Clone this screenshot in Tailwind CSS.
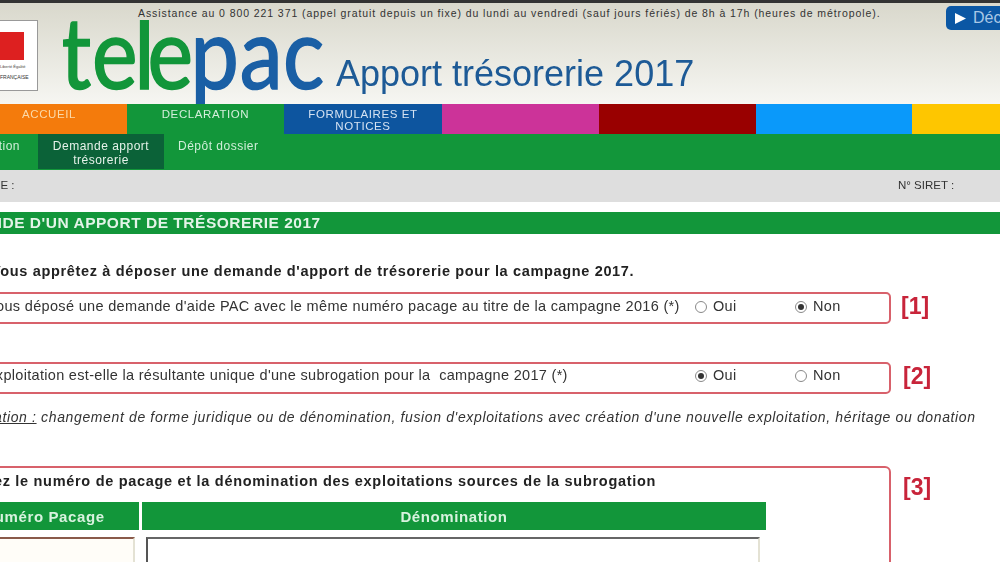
<!DOCTYPE html>
<html lang="fr">
<head>
<meta charset="utf-8">
<title>telepac - Apport trésorerie 2017</title>
<script src="https://cdn.jsdelivr.net/npm/@tailwindcss/browser@4"></script>
</head>
<body class="bg-white">
<div class="w-[1000px] h-[562px] overflow-hidden font-['Liberation_Sans',Arial,sans-serif] text-[#222] blur-[0.45px]">
<div class="w-[1100px] -ml-[29px]">
  <header class="h-[104px] border-t-[3px] border-[#333] bg-gradient-to-b from-[#d9d8cc] to-[#f6f6f2]">
    <div class="h-[17px] flex items-start">
      <p class="ml-[167px] mt-[4px] w-[760px] text-[10.5px] leading-[12px] tracking-[0.915px] whitespace-nowrap text-[#333]">Assistance au 0 800 221 371 (appel gratuit depuis un fixe) du lundi au vendredi (sauf jours fériés) de 8h à 17h (heures de métropole).</p>
      <div class="ml-[48px] mt-[3px] w-[100px] h-[24px] rounded-[5px] bg-[#0b57a4] flex items-center pl-[9px] gap-[7px] text-[16px] relative z-10">
        <svg class="shrink-0" width="11" height="11" viewBox="0 0 11 11"><path d="M0 0 L11 5.5 L0 11 Z" fill="#fff"/></svg>
        <span class="text-[#a9c8e6] whitespace-nowrap">Déconnexion</span>
      </div>
    </div>
    <div class="flex items-start">
      <div class="w-[67px] h-[71px] border border-[#999] bg-white flex flex-col items-start pl-[5px] pt-[11px]">
        <div class="w-[47px] h-[28px] flex">
          <div class="w-[17px] bg-[#2a4f9c]"></div>
          <div class="w-[6px] bg-white"></div>
          <div class="w-[24px] bg-[#dd2020]"></div>
        </div>
        <p class="ml-[23px] mt-[4px] text-[4px] leading-[5px] text-[#444] whitespace-nowrap">Liberté Égalité</p>
        <p class="ml-[23px] mt-[5px] text-[5px] leading-[6px] text-[#333] whitespace-nowrap">FRANÇAISE</p>
      </div>
      <svg class="ml-[25px] shrink-0" width="262" height="84" viewBox="0 0 262 84">
        <g transform="scale(0.88 1)">
          <text x="-3 33 81 96" y="69" font-family="Lato, sans-serif" font-size="98" fill="#12963a" stroke="#12963a" stroke-width="1.6">tele</text>
          <text x="145 201 250" y="69" font-family="Lato, sans-serif" font-size="98" fill="#1a5fa5" stroke="#1a5fa5" stroke-width="1.6">pac</text>
        </g>
      </svg>
      <h1 class="ml-[11px] mt-[34px] text-[36px] leading-[40px] text-[#1d5a96] whitespace-nowrap">Apport trésorerie 2017</h1>
    </div>
  </header>

  <nav class="flex h-[30px] text-[11.5px] leading-[12px] tracking-[0.6px] text-center">
    <a class="w-[156px] bg-[#f47b0c] text-[#fbd9a8] pt-[4px]">ACCUEIL</a>
    <a class="w-[157px] bg-[#12963a] text-[#d4eedb] pt-[4px]">DECLARATION</a>
    <a class="w-[158px] bg-[#0d559f] text-[#d4e2f2] pt-[4px]">FORMULAIRES ET<br>NOTICES</a>
    <a class="w-[157px] bg-[#cc3399]"></a>
    <a class="w-[157px] bg-[#990000]"></a>
    <a class="w-[156px] bg-[#0a99fa]"></a>
    <a class="w-[159px] bg-[#fec600]"></a>
  </nav>

  <div class="flex h-[36px] bg-[#12963a] text-[12px] leading-[14px] tracking-[0.5px] text-[#cfeed8] text-center">
    <a class="w-[67px] shrink-0 flex justify-end pt-[5px] pr-[18px] whitespace-nowrap">Information</a>
    <a class="w-[126px] h-[35px] bg-[#0b6238] text-[#e6f2ea] pt-[5px]">Demande apport<br>trésorerie</a>
    <a class="pl-[14px] pt-[5px] whitespace-nowrap">Dépôt dossier</a>
  </div>

  <div class="h-[32px] bg-[#dedede] flex items-center text-[11.5px] text-[#333]">
    <span class="w-[927px] -ml-[26px] shrink-0 text-left">N° PACAGE :</span>
    <span class="ml-[26px]">N° SIRET :</span>
  </div>

  <h2 class="mt-[10px] h-[22px] bg-[#12963a] text-[#e3f4e8] text-[15.5px] leading-[22px] font-bold tracking-[0.52px] whitespace-nowrap"><span class="inline-block -ml-[28px]">DEMANDE D'UN APPORT DE TRÉSORERIE 2017</span></h2>

  <p class="mt-[29px] h-[16px] pl-[20px] text-[14.5px] leading-[16px] font-bold tracking-[0.66px] whitespace-nowrap">Vous apprêtez à déposer une demande d'apport de trésorerie pour la campagne 2017.</p>

  <section class="mt-[13px] flex items-start h-[32px]">
    <div class="w-[920px] h-[32px] rounded-[5px] border-2 border-[#d8616b] pb-[2px] flex items-center text-[14.5px] tracking-[0.33px] whitespace-nowrap text-[#333]">
      <span class="w-[722px] shrink-0"><span class="inline-block -ml-[23px]">Avez-vous déposé une demande d'aide PAC avec le même numéro pacage au titre de la campagne 2016 (*)</span></span>
      <span class="w-[100px] shrink-0 flex items-center gap-[6px]"><span class="w-[12px] h-[12px] rounded-full border border-[#888] bg-white"></span>Oui</span>
      <span class="flex items-center gap-[6px]"><span class="w-[12px] h-[12px] rounded-full border border-[#888] bg-white flex items-center justify-center"><span class="w-[6px] h-[6px] rounded-full bg-[#333]"></span></span>Non</span>
    </div>
    <span class="ml-[10px] text-[23px] leading-[28px] font-bold text-[#c8243a]">[1]</span>
  </section>

  <section class="mt-[38px] flex items-start h-[32px]">
    <div class="w-[920px] h-[32px] rounded-[5px] border-2 border-[#d8616b] pb-[4px] flex items-center text-[14.5px] tracking-[0.31px] whitespace-nowrap text-[#333]">
      <span class="w-[722px] shrink-0"><span class="inline-block ml-[3px]">L'exploitation est-elle la résultante unique d'une subrogation pour la&nbsp; campagne 2017 (*)</span></span>
      <span class="w-[100px] shrink-0 flex items-center gap-[6px]"><span class="w-[12px] h-[12px] rounded-full border border-[#888] bg-white flex items-center justify-center"><span class="w-[6px] h-[6px] rounded-full bg-[#333]"></span></span>Oui</span>
      <span class="flex items-center gap-[6px]"><span class="w-[12px] h-[12px] rounded-full border border-[#888] bg-white"></span>Non</span>
    </div>
    <span class="ml-[12px] text-[23px] leading-[28px] font-bold text-[#c8243a]">[2]</span>
  </section>

  <p class="mt-[15px] h-[16px] text-[14px] leading-[16px] italic tracking-[0.635px] whitespace-nowrap text-[#333]"><span class="inline-block -ml-[26px] underline">Subrogation :</span> changement de forme juridique ou de dénomination, fusion d'exploitations avec création d'une nouvelle exploitation, héritage ou donation</p>

  <section class="mt-[41px] flex items-start">
    <div class="w-[920px] h-[120px] rounded-t-[6px] border-2 border-[#d8616b] pt-[5px]">
      <p class="h-[16px] text-[14.5px] leading-[16px] font-bold tracking-[0.7px] whitespace-nowrap"><span class="inline-block -ml-[34px]">Saisissez le numéro de pacage et la dénomination des exploitations sources de la subrogation</span></p>
      <div class="mt-[13px] w-[795px] grid grid-cols-[166px_624px] gap-x-[3px]">
        <div class="h-[28px] bg-[#12963a] text-[#d8f2df] text-[15px] font-bold tracking-[0.6px] leading-[30px] text-center pr-[24px] whitespace-nowrap">Numéro Pacage</div>
        <div class="h-[28px] bg-[#12963a] text-[#d8f2df] text-[15px] font-bold tracking-[0.6px] leading-[30px] text-center">Dénomination</div>
        <div class="mt-[7px] h-[28px] w-[162px] border-2 border-t-[#8a5a4a] border-l-[#8a8a80] border-r-[#e4e2d4] border-b-[#e4e2d4] bg-[#fffdf8]"></div>
        <div class="mt-[7px] ml-[4px] h-[28px] w-[614px] border-2 border-t-[#666] border-l-[#555] border-r-[#e4e2d4] border-b-[#e4e2d4] bg-white"></div>
      </div>
    </div>
    <span class="ml-[12px] mt-[7px] text-[23px] leading-[28px] font-bold text-[#c8243a]">[3]</span>
  </section>
</div>
</div>
</body>
</html>
